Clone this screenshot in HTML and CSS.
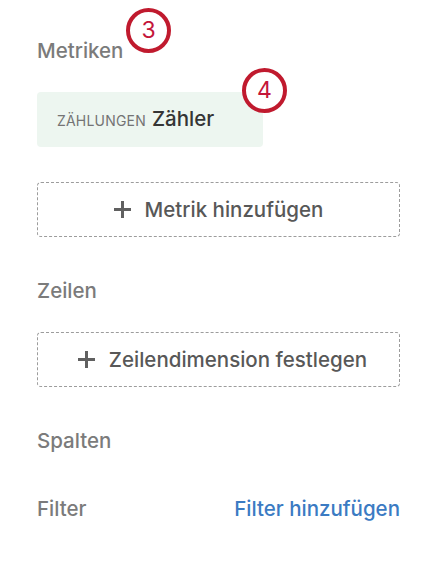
FILE: index.html
```html
<!DOCTYPE html>
<html lang="de">
	<head>
		<meta charset="UTF-8" />
		<meta name="viewport" content="width=device-width, initial-scale=1.0" />
		<title>Widget-Daten</title>
		<link rel="stylesheet" href="styles.css">
	</head>
	<body>
		<div class="panel">
			<section class="group">
				<h3 class="group-title">
					Metriken
					<span class="callout callout-title">3</span>
				</h3>
				<div class="metric-chip">
					<span class="chip-type">Zählungen</span>
					<span class="chip-name">Zähler</span>
					<span class="callout callout-chip">4</span>
				</div>
				<button type="button" class="add-button add-metric">
					<svg class="plus-icon" viewBox="0 0 16 16" aria-hidden="true">
						<path d="M8 0v16M0 8h16" />
					</svg>
					Metrik hinzufügen
				</button>
			</section>

			<section class="group group-rows">
				<h3 class="group-title">Zeilen</h3>
				<button type="button" class="add-button add-row">
					<svg class="plus-icon" viewBox="0 0 16 16" aria-hidden="true">
						<path d="M8 0v16M0 8h16" />
					</svg>
					Zeilendimension festlegen
				</button>
			</section>

			<section class="group group-columns">
				<h3 class="group-title">Spalten</h3>
			</section>

			<section class="group group-filter">
				<h3 class="group-title">Filter</h3>
				<a href="#" class="filter-link">Filter hinzufügen</a>
			</section>
		</div>
	</body>
</html>
```

FILE: styles.css
```css
/* General styling */
body {
	font-family: Inter, "Liberation Sans", Arial, sans-serif;
	margin: 0;
	padding: 0;
	background-color: #fff;
	color: #333;
}

.panel {
	padding: 39px 31px 0 37px;
}

/* Section headings */
.group-title {
	position: relative;
	display: inline-block;
	margin: 0;
	font-size: 20.5px;
	line-height: 24px;
	font-weight: 500;
	color: #7b7b7b;
}

.group-rows,
.group-columns {
	margin-top: 42px;
}

.group-filter {
	margin-top: 44px;
	display: flex;
	justify-content: space-between;
	align-items: center;
}

/* Selected metric */
.metric-chip {
	position: relative;
	display: flex;
	align-items: center;
	gap: 6px;
	width: 226px;
	height: 55px;
	box-sizing: border-box;
	margin-top: 29px;
	padding: 0 0 2px 20px;
	background-color: #edf6f0;
	border-radius: 4px;
}
.chip-type {
	font-size: 14px;
	letter-spacing: 0.2px;
	text-transform: uppercase;
	color: #747474;
	padding-top: 3px;
}
.chip-name {
	font-size: 20.5px;
	font-weight: 500;
	color: #353535;
}

/* Dashed add buttons */
.add-button {
	display: flex;
	justify-content: center;
	align-items: center;
	gap: 14px;
	width: 100%;
	height: 55px;
	margin-top: 29px;
	padding: 0;
	font-family: inherit;
	font-size: 20.5px;
	font-weight: 500;
	color: #585858;
	background-color: #fff;
	border: 1px dashed #9c9c9c;
	border-radius: 4px;
	cursor: pointer;
}
.add-metric {
	margin-top: 35px;
}
.add-row {
	padding-left: 8px;
}
.plus-icon {
	width: 17px;
	height: 17px;
	fill: none;
	stroke: #606060;
	stroke-width: 2.8;
}

.filter-link {
	font-size: 20.5px;
	line-height: 24px;
	font-weight: 500;
	color: #3b7bc3;
	text-decoration: none;
}

/* Numbered annotation rings */
.callout {
	position: absolute;
	width: 37px;
	height: 37px;
	border: 4px solid #c01a2e;
	border-radius: 50%;
	background-color: #fff;
	color: #c4163a;
	font-size: 23px;
	font-weight: 400;
	line-height: 37px;
	text-align: center;
}
.callout-title {
	left: 89px;
	top: -31px;
}
.callout-chip {
	right: -24px;
	top: -24px;
}
```
